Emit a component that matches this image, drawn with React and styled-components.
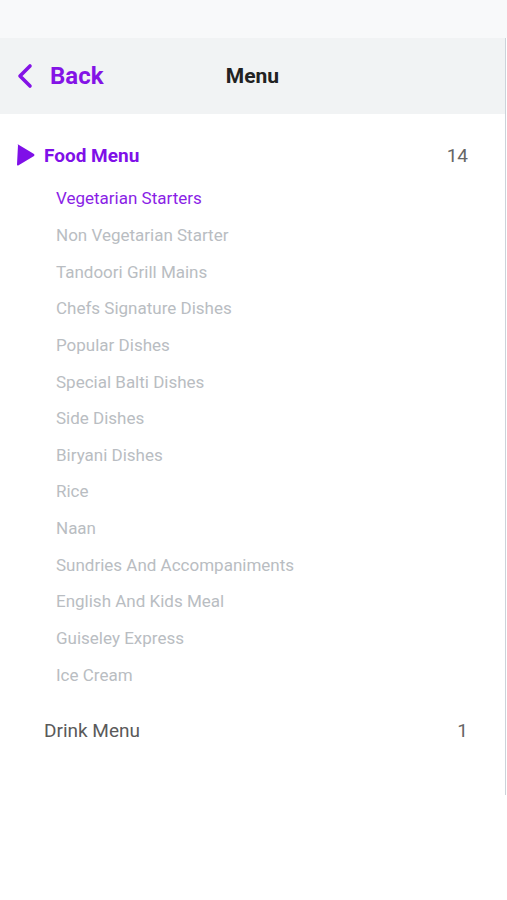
import React from "react";
import styled, { createGlobalStyle } from "styled-components";

const Global = createGlobalStyle`
  html, body { margin: 0; padding: 0; background: #ffffff; }
  body { font-family: Roboto, "Noto Sans", Arial, sans-serif; }
  * { box-sizing: border-box; }
`;

const Page = styled.div`
  width: 507px;
  height: 900px;
  background: #ffffff;
  display: flex;
  flex-direction: column;
`;

const StatusBar = styled.div`
  height: 38px;
  background: #f8f9fa;
`;

const Panel = styled.div`
  height: 757px;
  width: 506px;
  border-right: 1px solid #ccd3da;
  display: flex;
  flex-direction: column;
`;

const Header = styled.header`
  height: 76px;
  background: #f1f3f4;
  display: grid;
  grid-template-columns: 1fr auto 1fr;
  align-items: center;
  padding: 0 16px;
`;

const BackButton = styled.button`
  justify-self: start;
  display: flex;
  align-items: center;
  gap: 16px;
  border: 0;
  background: none;
  padding: 0;
  color: #8413e6;
  font-family: Roboto, Arial, sans-serif;
  font-weight: 700;
  font-size: 24px;
  cursor: pointer;
`;

const Title = styled.h1`
  margin: 0;
  font-size: 21px;
  font-weight: 700;
  color: #222222;
`;

const List = styled.div`
  padding: 26px 0 0 0;
  display: flex;
  flex-direction: column;
`;

const CategoryRow = styled.div`
  height: 30px;
  display: flex;
  align-items: center;
  padding: 0 37px 0 ${(p) => (p.$open ? "16px" : "44px")};
  gap: 9px;
`;

const CategoryName = styled.span`
  flex: 1;
  font-size: 19px;
  font-weight: ${(p) => (p.$open ? 700 : 400)};
  color: ${(p) => (p.$open ? "#7f10e8" : "#5a5a5a")};
`;

const Count = styled.span`
  font-size: 19px;
  color: #666666;
`;

const SubList = styled.ul`
  list-style: none;
  margin: 10px 0 23px 0;
  padding: 0 0 0 56px;
  display: flex;
  flex-direction: column;
`;

const SubItem = styled.li`
  height: 36.65px;
  display: flex;
  align-items: center;
  font-size: 17px;
  color: ${(p) => (p.$active ? "#8a1ee6" : "#b9bdc2")};
`;

const subs = [
  "Vegetarian Starters",
  "Non Vegetarian Starter",
  "Tandoori Grill Mains",
  "Chefs Signature Dishes",
  "Popular Dishes",
  "Special Balti Dishes",
  "Side Dishes",
  "Biryani Dishes",
  "Rice",
  "Naan",
  "Sundries And Accompaniments",
  "English And Kids Meal",
  "Guiseley Express",
  "Ice Cream",
];

export default function App() {
  return (
    <Page>
      <Global />
      <StatusBar />
      <Panel>
        <Header>
          <BackButton>
            <svg width="18" height="26" viewBox="0 0 18 26">
              <path d="M14 3 L4 13 L14 23" fill="none" stroke="#8413e6" strokeWidth="3.6" strokeLinecap="round" strokeLinejoin="round" />
            </svg>
            Back
          </BackButton>
          <Title>Menu</Title>
          <span />
        </Header>
        <List>
          <CategoryRow $open>
            <svg width="19" height="24" viewBox="0 0 19 24">
              <path d="M2 2 Q1 1 2.2 1.6 L18 11 Q19 12 18 13 L2.2 22.4 Q1 23 1 21.5 Z" fill="#7f10e8" />
            </svg>
            <CategoryName $open>Food Menu</CategoryName>
            <Count>14</Count>
          </CategoryRow>
          <SubList>
            {subs.map((s, i) => (
              <SubItem key={s} $active={i === 0}>{s}</SubItem>
            ))}
          </SubList>
          <CategoryRow>
            <CategoryName>Drink Menu</CategoryName>
            <Count>1</Count>
          </CategoryRow>
        </List>
      </Panel>
    </Page>
  );
}
